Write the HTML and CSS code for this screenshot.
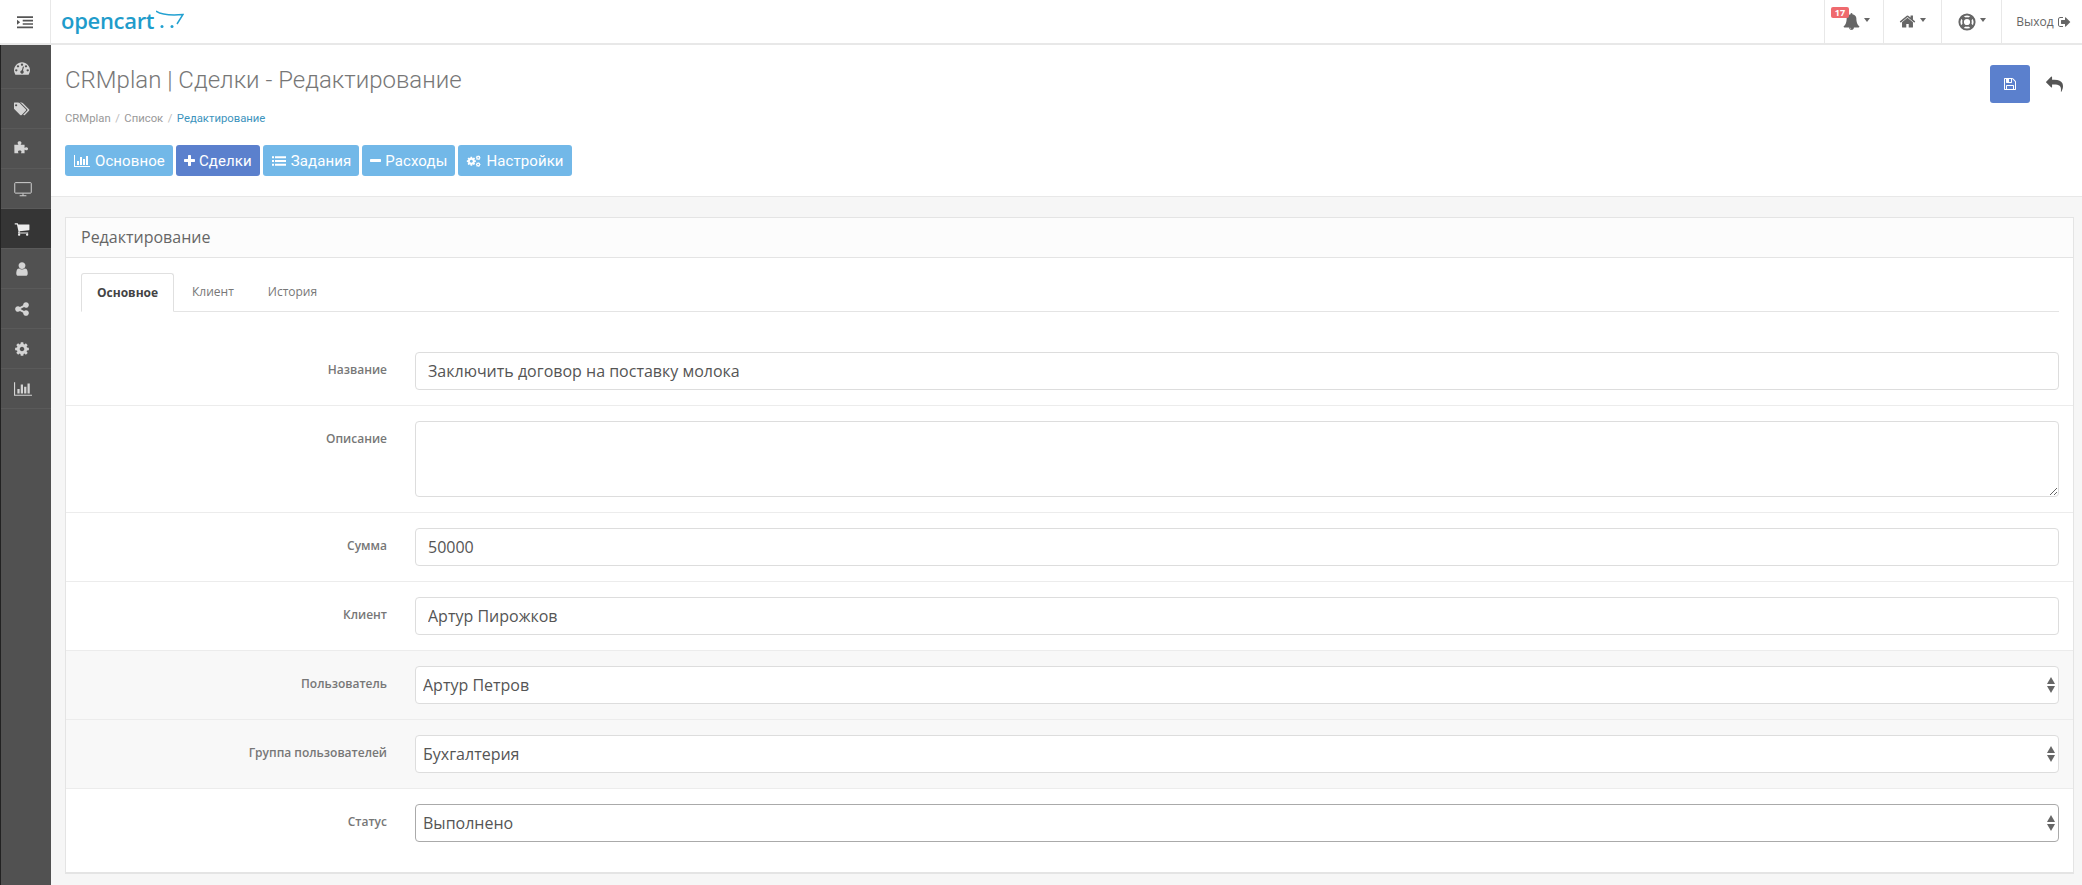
FILE: index.html
```html
<!DOCTYPE html>
<html lang="ru">
<head>
  <meta charset="UTF-8" />
  <title>CRMplan | Сделки - Редактирование</title>
  <link rel="stylesheet" href="styles.css">
</head>
<body>
  <svg class="sprite" xmlns="http://www.w3.org/2000/svg">
    <symbol id="i-dash" viewBox="0 0 1792 1792"><path d="M384 1152q0-53-37.5-90.5t-90.5-37.5-90.5 37.5-37.5 90.5 37.5 90.5 90.5 37.5 90.5-37.5 37.5-90.5zm192-448q0-53-37.5-90.5t-90.5-37.5-90.5 37.5-37.5 90.5 37.5 90.5 90.5 37.5 90.5-37.5 37.5-90.5zm428 481l101-382q6-26-7.5-48.5t-38.5-29.5-48 6.5-30 39.5l-101 382q-60 5-107 43.5t-63 98.5q-20 77 20 146t117 89 146-20 89-117q16-60-6-117t-72-91zm660-33q0-53-37.5-90.5t-90.5-37.5-90.5 37.5-37.5 90.5 37.5 90.5 90.5 37.5 90.5-37.5 37.5-90.5zm-640-640q0-53-37.5-90.5t-90.5-37.5-90.5 37.5-37.5 90.5 37.5 90.5 90.5 37.5 90.5-37.5 37.5-90.5zm448 192q0-53-37.5-90.5t-90.5-37.5-90.5 37.5-37.5 90.5 37.5 90.5 90.5 37.5 90.5-37.5 37.5-90.5zm320 448q0 261-141 483-19 29-54 29h-1402q-35 0-54-29-141-221-141-483 0-182 71-348t191-286 286-191 348-71 348 71 286 191 191 286 71 348z"/></symbol>
    <symbol id="i-tags" viewBox="0 0 1920 1792"><path d="M384 448q0-53-37.5-90.5t-90.5-37.5-90.5 37.5-37.5 90.5 37.5 90.5 90.5 37.5 90.5-37.5 37.5-90.5zm1067 576q0 53-37 90l-491 492q-39 37-91 37-53 0-90-37l-715-716q-38-37-64.5-101t-26.5-117v-416q0-52 38-90t90-38h416q53 0 117 26.5t102 64.5l715 714q37 39 37 91zm384 0q0 53-37 90l-491 492q-39 37-91 37-36 0-59-14t-53-45l470-470q37-37 37-90 0-52-37-91l-715-714q-38-38-102-64.5t-117-26.5h224q53 0 117 26.5t102 64.5l715 714q37 39 37 91z"/></symbol>
    <symbol id="i-puzzle" viewBox="130 190 1560 1560"><path d="M160 560h390c20-40-70-90-70-190 0-90 90-150 190-150s190 60 190 150c0 100-90 150-70 190h370v300c40 20 90-60 190-60 90 0 150 70 150 150s-60 150-150 150c-100 0-150-80-190-60v340h-350c-20-40 50-70 50-150 0-70-70-120-170-120s-170 50-170 120c0 80 70 110 50 150h-400z"/></symbol>
    <symbol id="i-desktop" viewBox="0 0 24 20"><path d="M2 1.500h20a1 1 0 0 1 1 1v12a1 1 0 0 1-1 1h-20a1 1 0 0 1-1-1v-12a1 1 0 0 1 1-1zM12 16v3M7.500 19h9" fill="none" stroke="currentColor" stroke-width="1.300"/></symbol>
    <symbol id="i-cart" viewBox="0 0 1792 1792"><path d="M704 1536q0 52-38 90t-90 38-90-38-38-90 38-90 90-38 90 38 38 90zm896 0q0 52-38 90t-90 38-90-38-38-90 38-90 90-38 90 38 38 90zm128-1088v512q0 24-16.5 42.5t-40.5 21.5l-1044 122q13 60 13 70 0 16-24 64h920q26 0 45 19t19 45-19 45-45 19h-1024q-26 0-45-19t-19-45q0-11 8-31.5t16-36 21.5-40 15.5-29.5l-177-823h-204q-26 0-45-19t-19-45 19-45 45-19h256q16 0 28.5 6.5t19.5 15.5 13 24.5 8 26 5.5 29.5 4.5 26h1201q26 0 45 19t19 45z"/></symbol>
    <symbol id="i-user" viewBox="0 0 1792 1792"><path d="M1536 1399q0 109-62.5 187t-150.5 78h-854q-88 0-150.5-78t-62.5-187q0-85 8.5-160.5t31.5-152 58.5-131 94-89 134.5-34.5q131 128 313 128t313-128q76 0 134.5 34.5t94 89 58.5 131 31.5 152 8.5 160.5zm-256-887q0 159-112.5 271.5t-271.5 112.5-271.5-112.5-112.5-271.5 112.5-271.5 271.5-112.5 271.5 112.5 112.5 271.5z"/></symbol>
    <symbol id="i-share" viewBox="0 0 1792 1792"><path d="M1344 1024q133 0 226.5 93.5t93.5 226.5-93.5 226.5-226.5 93.5-226.5-93.5-93.5-226.5q0-12 2-34l-360-180q-92 86-218 86-133 0-226.5-93.5t-93.5-226.5 93.5-226.5 226.5-93.5q126 0 218 86l360-180q-2-22-2-34 0-133 93.5-226.5t226.5-93.5 226.5 93.5 93.5 226.5-93.5 226.5-226.5 93.5q-126 0-218-86l-360 180q2 22 2 34t-2 34l360 180q92-86 218-86z"/></symbol>
    <symbol id="i-cog" viewBox="0 0 1792 1792"><path d="M1152 896q0-106-75-181t-181-75-181 75-75 181 75 181 181 75 181-75 75-181zm512-109v222q0 12-8 23t-20 13l-185 28q-19 54-39 91 35 50 107 138 10 12 10 25t-9 23q-27 37-99 108t-94 71q-12 0-26-9l-138-108q-44 23-91 38-16 136-29 186-7 28-36 28h-222q-14 0-24.5-8.5t-11.5-21.5l-28-184q-49-16-90-37l-141 107q-10 9-25 9-14 0-25-11-126-114-165-168-7-10-7-23 0-12 8-23 15-21 51-66.5t54-70.5q-27-50-41-99l-183-27q-13-2-21-12.5t-8-23.5v-222q0-12 8-23t19-13l186-28q14-46 39-92-40-57-107-138-10-12-10-24 0-10 9-23 26-36 98.5-107.5t94.5-71.5q13 0 26 10l138 107q44-23 91-38 16-136 29-186 7-28 36-28h222q14 0 24.5 8.5t11.5 21.5l28 184q49 16 90 37l142-107q9-9 24-9 13 0 25 10 129 119 165 170 7 8 7 22 0 12-8 23-15 21-51 66.5t-54 70.5q26 50 41 98l183 28q13 2 21 12.5t8 23.5z"/></symbol>
    <symbol id="i-chart" viewBox="0 0 2048 1792"><path d="M640 896v512h-256v-512h256zm384-512v1024h-256v-1024h256zm1024 1152v128h-2048v-1536h128v1408h1920zm-640-896v768h-256v-768h256zm384-384v1152h-256v-1152h256z"/></symbol>
    <symbol id="i-plus" viewBox="0 0 1408 1792"><path d="M1408 736v192q0 40-28 68t-68 28h-416v416q0 40-28 68t-68 28h-192q-40 0-68-28t-28-68v-416h-416q-40 0-68-28t-28-68v-192q0-40 28-68t68-28h416v-416q0-40 28-68t68-28h192q40 0 68 28t28 68v416h416q40 0 68 28t28 68z"/></symbol>
    <symbol id="i-minus" viewBox="0 0 1408 1792"><path d="M1408 736v192q0 40-28 68t-68 28h-1216q-40 0-68-28t-28-68v-192q0-40 28-68t68-28h1216q40 0 68 28t28 68z"/></symbol>
    <symbol id="i-list" viewBox="0 0 1792 1792"><path d="M0 288h256v256h-256zM384 288h1408v256h-1408zM0 768h256v256h-256zM384 768h1408v256h-1408zM0 1248h256v256h-256zM384 1248h1408v256h-1408z"/></symbol>
    <symbol id="i-cogs" viewBox="0 0 1792 1792"><use href="#i-cog" x="-120" y="250" width="1350" height="1350"/><use href="#i-cog" x="1080" y="130" width="700" height="700"/><use href="#i-cog" x="1080" y="1000" width="700" height="700"/></symbol>
    <symbol id="i-bell" viewBox="0 0 1792 1792"><path d="M912 1696q0-16-16-16-59 0-101.5-42.5t-42.5-101.5q0-16-16-16t-16 16q0 73 51.5 124.5t124.5 51.5q16 0 16-16zm816-288q0 52-38 90t-90 38h-448q0 106-75 181t-181 75-181-75-75-181h-448q-52 0-90-38t-38-90q50-42 91-88t85-119.5 74.5-158.5 50-206 19.5-260q0-152 117-282.5t307-158.5q-8-19-8-39 0-40 28-68t68-28 68 28 28 68q0 20-8 39 190 28 307 158.5t117 282.5q0 139 19.5 260t50 206 74.5 158.5 85 119.5 91 88z"/></symbol>
    <symbol id="i-home" viewBox="0 0 1792 1792"><path d="M1472 992v480q0 26-19 45t-45 19h-384v-384h-256v384h-384q-26 0-45-19t-19-45v-480q0-1 .5-3t.5-3l575-474 575 474q1 2 1 6zm223-69l-62 74q-8 9-21 11h-3q-13 0-21-7l-692-577-692 577q-12 8-24 7-13-2-21-11l-62-74q-8-10-7-23.5t11-21.5l719-599q32-26 76-26t76 26l244 204v-195q0-14 9-23t23-9h192q14 0 23 9t9 23v408l219 182q10 8 11 21.5t-7 23.5z"/></symbol>
    <symbol id="i-ring" viewBox="0 0 32 32"><g fill="none" stroke="currentColor"><circle cx="16" cy="16" r="13.500" stroke-width="3.500"/><circle cx="16" cy="16" r="7" stroke-width="3"/><path d="M6 6l5 5M26 6l-5 5M6 26l5-5M26 26l-5-5" stroke-width="7"/></g></symbol>
    <symbol id="i-exit" viewBox="0 0 1664 1792"><path d="M704 1440q0 4 1 20t.5 26.5-3 23.5-10 19.5-20.5 6.5h-320q-119 0-203.5-84.5t-84.5-203.5v-704q0-119 84.5-203.5t203.5-84.5h320q13 0 22.5 9.5t9.5 22.5q0 4 1 20t.5 26.5-3 23.5-10 19.5-20.5 6.5h-320q-66 0-113 47t-47 113v704q0 66 47 113t113 47h312l11.5 1 11.5 3 8 5.5 7 9 2 13.5zm928-544q0 26-19 45l-544 544q-19 19-45 19t-45-19-19-45v-288h-448q-26 0-45-19t-19-45v-384q0-26 19-45t45-19h448v-288q0-26 19-45t45-19 45 19l544 544q19 19 19 45z"/></symbol>
    <symbol id="i-save" viewBox="0 0 1792 1792"><path d="M512 1536h768v-384h-768v384zm896 0h128v-896q0-14-10-38.5t-20-34.5l-281-281q-10-10-34-20t-39-10v416q0 40-28 68t-68 28h-576q-40 0-68-28t-28-68v-416h-128v1280h128v-416q0-40 28-68t68-28h832q40 0 68 28t28 68v416zm-384-928v-320q0-13-9.5-22.5t-22.5-9.5h-192q-13 0-22.5 9.5t-9.5 22.5v320q0 13 9.5 22.5t22.5 9.5h192q13 0 22.5-9.5t9.5-22.5zm640 32v928q0 40-28 68t-68 28h-1344q-40 0-68-28t-28-68v-1344q0-40 28-68t68-28h928q40 0 88 20t76 48l280 280q28 28 48 76t20 88z"/></symbol>
    <symbol id="i-reply" viewBox="0 0 1792 1792"><path d="M1792 1120q0 166-127 451-3 7-10.5 24t-13.5 30-13 22q-12 17-28 17-15 0-23.5-10t-8.5-25q0-9 2.5-26.5t2.5-23.5q5-68 5-123 0-101-17.5-181t-48.5-138.5-80-101-105.5-69.5-133-42.5-154-21.5-175.5-6h-224v256q0 26-19 45t-45 19-45-19l-512-512q-19-19-19-45t19-45l512-512q19-19 45-19t45 19 19 45v256h224q713 0 875 403 53 134 53 333z"/></symbol>
    <symbol id="i-indent" viewBox="0 0 1792 1792"><path d="M0 256h1792v192h-1792zM640 640h1152v192h-1152zM640 1024h1152v192h-1152zM0 1408h1792v192h-1792zM0 640l352 288-352 288z"/></symbol>
  </svg>

  <div class="header">
    <a class="toggle"><svg class="ico"><use href="#i-indent"/></svg></a>
    <div class="logo">
      <span class="logo-text">opencart</span>
      <svg class="logo-cart" viewBox="0 0 28 18">
        <path d="M0 1C6 5 16 5.500 27 4.500L21 14" fill="none" stroke="#23a1d1" stroke-width="1.500"/>
        <circle cx="6" cy="16.500" r="1.500" fill="#23a1d1"/>
        <circle cx="16" cy="16.500" r="1.500" fill="#23a1d1"/>
      </svg>
    </div>
    <ul class="top-nav">
      <li class="bell-item">
        <span class="badge">17</span>
        <svg class="ico bell"><use href="#i-bell"/></svg><span class="caret"></span>
      </li>
      <li class="home-item"><svg class="ico"><use href="#i-home"/></svg><span class="caret"></span></li>
      <li class="help-item"><svg class="ico ring"><use href="#i-ring"/></svg><span class="caret"></span></li>
      <li class="exit-item">Выход <svg class="ico exit"><use href="#i-exit"/></svg></li>
    </ul>
  </div>

  <div class="container">
    <div class="sidebar">
      <a><svg class="ico"><use href="#i-dash"/></svg></a>
      <a><svg class="ico"><use href="#i-tags"/></svg></a>
      <a><svg class="ico"><use href="#i-puzzle"/></svg></a>
      <a><svg class="ico wide"><use href="#i-desktop"/></svg></a>
      <a class="active"><svg class="ico"><use href="#i-cart"/></svg></a>
      <a><svg class="ico"><use href="#i-user"/></svg></a>
      <a><svg class="ico"><use href="#i-share"/></svg></a>
      <a><svg class="ico"><use href="#i-cog"/></svg></a>
      <a><svg class="ico wide"><use href="#i-chart"/></svg></a>
    </div>

    <div class="main">
      <div class="page-header">
        <div class="page-actions">
          <a class="btn-save"><svg class="ico"><use href="#i-save"/></svg></a>
          <a class="btn-back"><svg class="ico"><use href="#i-reply"/></svg></a>
        </div>
        <h1>CRMplan | Сделки - Редактирование</h1>
        <ul class="breadcrumb">
          <li>CRMplan</li>
          <li>Список</li>
          <li class="current">Редактирование</li>
        </ul>
        <div class="module-nav">
          <a class="btn"><svg class="ico big"><use href="#i-chart"/></svg>Основное</a>
          <a class="btn active"><svg class="ico thin"><use href="#i-plus"/></svg>Сделки</a>
          <a class="btn"><svg class="ico"><use href="#i-list"/></svg>Задания</a>
          <a class="btn"><svg class="ico thin"><use href="#i-minus"/></svg>Расходы</a>
          <a class="btn"><svg class="ico"><use href="#i-cogs"/></svg>Настройки</a>
        </div>
      </div>

      <div class="content">
        <div class="panel">
          <div class="panel-heading">Редактирование</div>
          <div class="panel-body">
            <ul class="tabs">
              <li class="active">Основное</li>
              <li>Клиент</li>
              <li>История</li>
            </ul>

            <form class="edit-form">
              <div class="form-group first">
                <label>Название</label>
                <input type="text" value="Заключить договор на поставку молока">
              </div>
              <div class="form-group">
                <label>Описание</label>
                <textarea></textarea>
              </div>
              <div class="form-group">
                <label>Сумма</label>
                <input type="text" value="50000">
              </div>
              <div class="form-group">
                <label>Клиент</label>
                <input type="text" value="Артур Пирожков">
              </div>
              <div class="form-group shaded">
                <label>Пользователь</label>
                <div class="select-wrap">
                  <select><option>Артур Петров</option></select>
                  <span class="arrows"></span>
                </div>
              </div>
              <div class="form-group shaded">
                <label>Группа пользователей</label>
                <div class="select-wrap">
                  <select><option>Бухгалтерия</option></select>
                  <span class="arrows"></span>
                </div>
              </div>
              <div class="form-group last">
                <label>Статус</label>
                <div class="select-wrap">
                  <select class="focused"><option>Выполнено</option></select>
                  <span class="arrows"></span>
                </div>
              </div>
            </form>
          </div>
        </div>
      </div>
    </div>
  </div>
</body>
</html>
```

FILE: styles.css
```css
html, body {
  height: 100%;
}

body {
  margin: 0;
  font-family: "Open Sans", sans-serif;
  font-size: 12px;
  color: #666;
  background-color: #fff;
  display: flex;
  flex-direction: column;
  overflow: hidden;
}

.sprite {
  display: none;
}

.ico {
  width: 14px;
  height: 14px;
  fill: currentColor;
  flex: none;
}

/* top bar */
.header {
  height: 43px;
  flex: none;
  display: flex;
  align-items: center;
  background-color: #fff;
  border-bottom: 2px solid #e8e8e8;
  box-sizing: content-box;
}

.toggle {
  width: 51px;
  height: 43px;
  box-sizing: border-box;
  border-right: 1px solid #e8e8e8;
  display: flex;
  align-items: center;
  justify-content: center;
  color: #555;
}

.toggle .ico {
  width: 16px;
  height: 16px;
}

.logo {
  display: flex;
  align-items: flex-start;
  margin-left: 10px;
  height: 43px;
}

.logo-text {
  font-family: "Open Sans", sans-serif;
  font-weight: 600;
  font-size: 22px;
  line-height: 40px;
  letter-spacing: -0.3px;
  color: #1f9ccb;
}

.logo-cart {
  width: 28px;
  height: 18px;
  margin: 10px 0 0 2px;
}

.top-nav {
  list-style: none;
  margin: 0 0 0 auto;
  padding: 0;
  display: flex;
  height: 43px;
}

.top-nav li {
  position: relative;
  display: flex;
  align-items: center;
  justify-content: center;
  box-sizing: border-box;
  border-left: 1px solid #e8e8e8;
  color: #666;
}

.bell-item {
  width: 59px;
}

.home-item {
  width: 58px;
}

.help-item {
  width: 60px;
}

.exit-item {
  width: 81px;
  gap: 3px;
  padding-left: 3px;
  color: #777;
}

.top-nav .ico {
  width: 17px;
  height: 17px;
}

.top-nav .ring {
  width: 18px;
  height: 18px;
}

.top-nav .exit {
  width: 14px;
  height: 14px;
}

.top-nav .bell {
  margin-left: 4px;
}

.caret {
  width: 0;
  height: 0;
  margin-left: 4px;
  margin-top: -3px;
  border-left: 3.500px solid transparent;
  border-right: 3.500px solid transparent;
  border-top: 4px solid #666;
}

.badge {
  position: absolute;
  left: 6px;
  top: 7px;
  width: 18px;
  height: 11px;
  border-radius: 2px;
  background-color: #ef6a6e;
  color: #fff;
  font-size: 9px;
  font-weight: 700;
  line-height: 11px;
  text-align: center;
  z-index: 1;
}

/* left menu */
.container {
  display: flex;
  flex: 1;
  min-height: 0;
}

.sidebar {
  width: 50px;
  flex: none;
  background-color: #515151;
  border-left: 1px solid #222;
  padding-top: 3px;
}

.sidebar a {
  height: 40px;
  box-sizing: border-box;
  display: flex;
  align-items: center;
  padding-left: 13px;
  border-bottom: 1px solid #5a5a5a;
  color: #d4d4d4;
}

.sidebar a:first-child {
  height: 41px;
}

.sidebar a.active {
  background-color: #353535;
  color: #eee;
}

.sidebar .ico {
  width: 16px;
  height: 16px;
}

.sidebar .wide {
  width: 18px;
}

/* page header */
.main {
  flex: 1;
  min-width: 0;
  display: flex;
  flex-direction: column;
  background-color: #f6f6f6;
}

.page-header {
  background-color: #fff;
  height: 152px;
  box-sizing: border-box;
  padding: 19px 12px 0 14px;
  border-bottom: 1px solid #e8e8e8;
  position: relative;
}

h1 {
  margin: 0;
  font-family: Roboto, sans-serif;
  font-weight: 300;
  font-size: 24px;
  line-height: 33px;
  color: #777;
}

.breadcrumb {
  list-style: none;
  margin: 13px 0 0;
  padding: 0;
  display: flex;
  font-family: Roboto, sans-serif;
  font-size: 11.300px;
  line-height: 18px;
  color: #999;
}

.breadcrumb li + li::before {
  content: "/";
  margin: 0 4.500px;
  color: #bbb;
}

.breadcrumb .current {
  color: #3c93bd;
}

.page-actions {
  float: right;
  display: flex;
  align-items: center;
  margin: 1px 0 0;
}

.btn-save {
  width: 40px;
  height: 38px;
  display: flex;
  align-items: center;
  justify-content: center;
  border-radius: 3px;
  background-color: #5b80cd;
  color: #fff;
}

.btn-back {
  width: 32px;
  margin-left: 8px;
  display: flex;
  justify-content: center;
  color: #555;
}

.btn-back .ico {
  width: 17px;
  height: 17px;
}

.module-nav {
  display: flex;
  gap: 3px;
  margin-top: 17px;
}

.btn {
  height: 31px;
  box-sizing: border-box;
  padding: 0 8px;
  display: flex;
  align-items: center;
  gap: 4px;
  border-radius: 3px;
  background-color: #72b8e8;
  color: #fff;
  font-family: Roboto, sans-serif;
  font-size: 15px;
  letter-spacing: 0.1px;
}

.btn .ico {
  width: 16px;
}

.btn .big {
  width: 18px;
}

.btn .thin {
  width: 11px;
}

.btn.active {
  background-color: #5b80cd;
}

/* form panel */
.content {
  flex: 1;
  padding: 20px 8px 0 14px;
}

.panel {
  background-color: #fff;
  border: 1px solid #e4e4e4;
  border-bottom-width: 2px;
}

.panel-heading {
  height: 40px;
  box-sizing: border-box;
  padding-left: 15px;
  background-color: #fcfcfc;
  border-bottom: 1px solid #e4e4e4;
  font-size: 16px;
  line-height: 39px;
  color: #666;
}

.panel-body {
  padding-top: 15px;
}

.tabs {
  list-style: none;
  margin: 0 14px 0 15px;
  padding: 0;
  display: flex;
  height: 39px;
  box-sizing: border-box;
  border-bottom: 1px solid #e4e4e4;
}

.tabs li {
  height: 39px;
  box-sizing: border-box;
  padding: 0 17px;
  line-height: 38px;
  color: #777;
}

.tabs li.active {
  padding: 0 15px;
  width: 93px;
  border: 1px solid #e0e0e0;
  border-bottom-color: #fff;
  border-radius: 3px 3px 0 0;
  font-weight: 700;
  color: #444;
  margin-right: 1px;
}

.form-group {
  display: flex;
  align-items: flex-start;
  padding: 15px 14px 15px 0;
  border-bottom: 1px solid #ececec;
}

.form-group.first {
  padding-top: 40px;
}

.form-group.last {
  border-bottom: none;
  padding-bottom: 30px;
}

.form-group.shaded {
  background-color: #f8f8f8;
}

.form-group label {
  width: 321px;
  flex: none;
  text-align: right;
  font-weight: 600;
  line-height: 17px;
  padding-top: 9px;
  margin-right: 28px;
  color: #777;
}

input, textarea, select {
  width: 100%;
  box-sizing: border-box;
  background-color: #fff;
  border: 1px solid #ddd;
  border-radius: 4px;
  font-family: "Open Sans", sans-serif;
  font-size: 16px;
  color: #555;
  outline: none;
}

input {
  height: 38px;
  padding: 0 12px;
}

textarea {
  display: block;
  height: 76px;
  padding: 8px 12px;
}

.select-wrap {
  flex: 1;
  position: relative;
}

select {
  height: 38px;
  padding: 0 7px;
  appearance: none;
  display: block;
}

select.focused {
  border-color: #aaa;
}

.arrows {
  position: absolute;
  right: 4px;
  top: 11px;
  width: 8px;
  height: 16px;
  pointer-events: none;
}

.arrows::before, .arrows::after {
  content: "";
  position: absolute;
  left: 0;
  border-left: 4px solid transparent;
  border-right: 4px solid transparent;
}

.arrows::before {
  top: 0;
  border-bottom: 7px solid #666;
}

.arrows::after {
  bottom: 0;
  border-top: 7px solid #666;
}
```
